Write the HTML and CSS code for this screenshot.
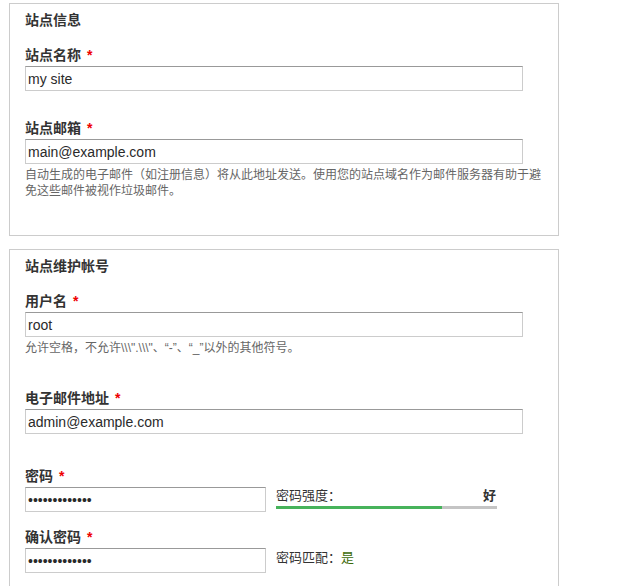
FILE: index.html
```html
<!DOCTYPE html>
<html>
<head>
  <meta charset="UTF-8">
  <title>站点配置</title>
  <link rel="stylesheet" href="styles.css">
</head>
<body>
  <div class="panel">
    <div class="panel-title">站点信息</div>

    <div class="form-item">
      <label for="siteName">站点名称 <span class="req">*</span></label>
      <input type="text" id="siteName" class="form-text" value="my site">
    </div>

    <div class="form-item">
      <label for="siteMail">站点邮箱 <span class="req">*</span></label>
      <input type="text" id="siteMail" class="form-text" value="main@example.com">
      <div class="description">自动生成的电子邮件（如注册信息）将从此地址发送。使用您的站点域名作为邮件服务器有助于避免这些邮件被视作垃圾邮件。</div>
    </div>
  </div>

  <div class="panel">
    <div class="panel-title">站点维护帐号</div>

    <div class="form-item">
      <label for="accountName">用户名 <span class="req">*</span></label>
      <input type="text" id="accountName" class="form-text" value="root">
      <div class="description">允许空格，不允许\\\".\\\"、“-”、“_”以外的其他符号。</div>
    </div>

    <div class="form-item">
      <label for="accountMail">电子邮件地址 <span class="req">*</span></label>
      <input type="text" id="accountMail" class="form-text" value="admin@example.com">
    </div>

    <div class="form-item form-item-pass">
      <label for="pass1">密码 <span class="req">*</span></label>
      <div class="password-row">
        <input type="password" id="pass1" class="form-text short" value="secretpasswd1">
        <div class="strength">
          <div class="strength-text">
            <span>密码强度：</span>
            <strong>好</strong>
          </div>
          <div class="strength-bar">
            <div class="strength-fill" style="width: 75%"></div>
          </div>
        </div>
      </div>
    </div>

    <div class="form-item form-item-confirm">
      <label for="pass2">确认密码 <span class="req">*</span></label>
      <div class="password-row">
        <input type="password" id="pass2" class="form-text short" value="secretpasswd1">
        <div class="match">密码匹配：<span class="ok">是</span></div>
      </div>
    </div>
  </div>
</body>
</html>
```

FILE: styles.css
```css
body {
  font-family: "Liberation Sans", "Noto Sans CJK SC", sans-serif;
  margin: 0;
  padding: 3px 0 0 9px;
  color: #333;
  background: #fff;
}

.panel {
  width: 550px;
  box-sizing: border-box;
  border: 1px solid #ccc;
  padding: 7px 15px 31px;
}

.panel + .panel {
  margin-top: 13px;
}

.panel-title {
  font-size: 14px;
  font-weight: bold;
  line-height: 18px;
  margin-bottom: 17px;
}

.form-item {
  display: flow-root;
}

.form-item + .form-item {
  margin-top: 28px;
}

.form-item label {
  display: block;
  font-size: 14px;
  font-weight: bold;
  line-height: 18px;
  margin-bottom: 2px;
}

.req {
  color: #e00;
  margin-left: 2px;
}

.form-text {
  display: block;
  width: 498px;
  height: 25px;
  box-sizing: border-box;
  margin: 0;
  padding: 0 2px;
  border: 1px solid #ccc;
  border-top-color: #999;
  font-family: "Liberation Sans", "Noto Sans CJK SC", sans-serif;
  font-size: 14px;
  color: #2a2a2a;
  background: #fff;
}

.form-text.short {
  width: 241px;
}

.description {
  font-size: 12px;
  line-height: 16px;
  color: #666;
  margin: 3px 0 5px;
}

.form-item + .form-item-pass {
  margin-top: 33px;
}

.form-item + .form-item-confirm {
  margin-top: 16px;
}

.password-row {
  display: flex;
  align-items: flex-start;
  gap: 10px;
}

.strength {
  width: 221px;
}

.strength-text {
  display: flex;
  justify-content: space-between;
  font-size: 13px;
  line-height: 17px;
  padding-right: 1px;
}

.strength-bar {
  height: 3px;
  margin-top: 2px;
  background: #c4c4c4;
}

.strength-fill {
  height: 100%;
  background: #47b35b;
}

.match {
  font-size: 13px;
  line-height: 20px;
}

.match .ok {
  color: #3d6b0a;
}
```
